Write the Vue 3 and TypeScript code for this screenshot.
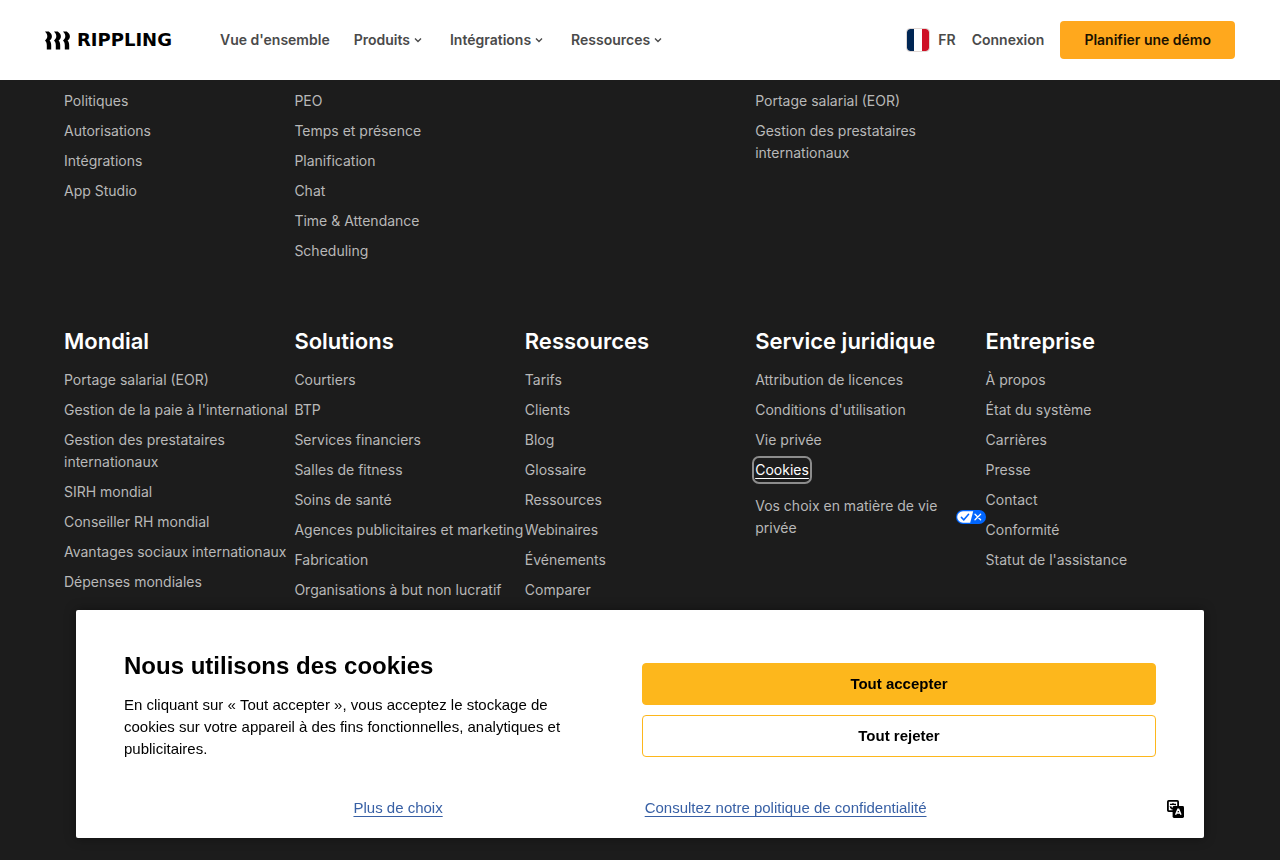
<script setup lang="ts">
interface Menu {
  label: string
  dropdown: boolean
}

interface LinkGroup {
  title: string
  links: string[]
}

const menus: Menu[] = [
  { label: 'Vue d\'ensemble', dropdown: false },
  { label: 'Produits', dropdown: true },
  { label: 'Intégrations', dropdown: true },
  { label: 'Ressources', dropdown: true },
]

const platformColumns: string[][] = [
  ['Politiques', 'Autorisations', 'Intégrations', 'App Studio'],
  ['PEO', 'Temps et présence', 'Planification', 'Chat', 'Time & Attendance', 'Scheduling'],
  [],
  ['Portage salarial (EOR)', 'Gestion des prestataires internationaux'],
  [],
]

const groups: LinkGroup[] = [
  {
    title: 'Mondial',
    links: [
      'Portage salarial (EOR)',
      'Gestion de la paie à l\'international',
      'Gestion des prestataires internationaux',
      'SIRH mondial',
      'Conseiller RH mondial',
      'Avantages sociaux internationaux',
      'Dépenses mondiales',
    ],
  },
  {
    title: 'Solutions',
    links: [
      'Courtiers',
      'BTP',
      'Services financiers',
      'Salles de fitness',
      'Soins de santé',
      'Agences publicitaires et marketing',
      'Fabrication',
      'Organisations à but non lucratif',
    ],
  },
  {
    title: 'Ressources',
    links: ['Tarifs', 'Clients', 'Blog', 'Glossaire', 'Ressources', 'Webinaires', 'Événements', 'Comparer'],
  },
  {
    title: 'Service juridique',
    links: [
      'Attribution de licences',
      'Conditions d\'utilisation',
      'Vie privée',
      'Cookies',
      'Vos choix en matière de vie privée',
    ],
  },
  {
    title: 'Entreprise',
    links: [
      'À propos',
      'État du système',
      'Carrières',
      'Presse',
      'Contact',
      'Conformité',
      'Statut de l\'assistance',
    ],
  },
]
</script>

<template>
  <div class="page">
    <header class="topbar">
      <a class="logo" href="#" aria-label="Rippling">
        <svg class="logo-mark" viewBox="0 0 25 19" aria-hidden="true">
          <g v-for="x in [0, 9, 18]" :key="x" :transform="`translate(${x} 0)`">
            <path d="M0 0.5H3.8C5.8 2 6.9 3.6 6.9 5.4C6.9 7.2 6 8.4 4.6 9.5C5.8 10.8 6.2 12.4 6.2 14.4V18.5H1.8V14.2C1.8 12.2 1.2 10.7 0 9.5C1.5 8.3 2.3 7 2.3 5.2C2.3 3.5 1.5 2 0 0.5Z" />
          </g>
        </svg>
        <span class="logo-word">RIPPLING</span>
      </a>
      <nav class="menu" aria-label="Principal">
        <template v-for="m in menus" :key="m.label">
          <button v-if="m.dropdown" type="button" class="menu-item">
            {{ m.label }}
            <svg viewBox="0 0 12 12" width="12" height="12" aria-hidden="true">
              <path d="M3 4.5L6 7.5L9 4.5" fill="none" stroke="currentColor" stroke-width="1.4" />
            </svg>
          </button>
          <a v-else href="#" class="menu-item">{{ m.label }}</a>
        </template>
      </nav>
      <div class="actions">
        <button type="button" class="locale">
          <svg viewBox="0 0 24 24" width="24" height="24" aria-hidden="true">
            <clipPath id="flag-clip"><rect x="1" y="1" width="22" height="22" rx="3" /></clipPath>
            <g clip-path="url(#flag-clip)">
              <rect width="8" height="24" fill="#002654" />
              <rect x="8" width="8" height="24" fill="#fff" />
              <rect x="16" width="8" height="24" fill="#ce1126" />
            </g>
            <rect x="0.5" y="0.5" width="23" height="23" rx="3.5" fill="none" stroke="#e0d8d5" />
          </svg>
          FR
        </button>
        <a href="#" class="login">Connexion</a>
        <a href="#" class="demo">Planifier une démo</a>
      </div>
    </header>

    <footer class="footer">
      <div class="columns">
        <ul v-for="(col, i) in platformColumns" :key="i" class="links">
          <li v-for="link in col" :key="link"><a href="#">{{ link }}</a></li>
        </ul>
      </div>
      <div class="columns titled">
        <section v-for="g in groups" :key="g.title">
          <h2>{{ g.title }}</h2>
          <ul class="links">
            <li v-for="link in g.links" :key="link">
              <a v-if="link === 'Cookies'" href="#" class="focused">{{ link }}</a>
              <a v-else-if="link.startsWith('Vos choix')" href="#" class="privacy">
                <span>{{ link }}</span>
                <svg viewBox="0 0 30 14" width="30" height="14" aria-hidden="true">
                  <rect width="30" height="14" rx="7" fill="#06f" />
                  <path d="M7 1.2H17.2L14.2 12.8H7A5.8 5.8 0 0 1 7 1.2Z" fill="#fff" />
                  <path d="M5.4 7.4L7.8 9.8L12.6 4.2" fill="none" stroke="#06f" stroke-width="1.5" stroke-linecap="round" />
                  <path d="M19 4.2L24.6 9.8M24.6 4.2L19 9.8" fill="none" stroke="#fff" stroke-width="1.3" stroke-linecap="round" />
                </svg>
              </a>
              <a v-else href="#">{{ link }}</a>
            </li>
          </ul>
        </section>
      </div>
    </footer>

    <div class="banner" role="dialog" aria-labelledby="cookie-title">
      <div class="banner-main">
        <div class="message">
          <h1 id="cookie-title">Nous utilisons des cookies</h1>
          <p>
            En cliquant sur «&nbsp;Tout accepter&nbsp;», vous acceptez le stockage de cookies sur votre
            appareil à des fins fonctionnelles, analytiques et publicitaires.
          </p>
        </div>
        <div class="choices">
          <button type="button" class="choice accept">Tout accepter</button>
          <button type="button" class="choice">Tout rejeter</button>
        </div>
      </div>
      <div class="banner-links">
        <a href="#">Plus de choix</a>
        <a href="#">Consultez notre politique de confidentialité</a>
      </div>
      <button type="button" class="translate" aria-label="Langue">
        <svg viewBox="0 0 18 18" width="18" height="18" aria-hidden="true">
          <rect x="1.9" y="0.9" width="10.2" height="10.2" rx="0.8" fill="#fff" stroke="#000" stroke-width="1.8" />
          <path d="M4 4.4H10M7 3V4.4M4.6 6.2L5.8 8.4H8.4L9.4 5.6" fill="none" stroke="#000" stroke-width="1.1" />
          <rect x="6.6" y="6" width="11.4" height="12" rx="1.4" />
          <path d="M9.6 14.8L11.9 9.2H12.7L15 14.8M10.6 13H14" fill="none" stroke="#fff" stroke-width="1.4" />
          <path d="M4 6.6L5.4 9H7" fill="none" stroke="#000" stroke-width="1" />
        </svg>
      </button>
    </div>
  </div>
</template>

<style>
html,
body {
  background: #1c1c1c;
}
</style>

<style scoped>
.page {
  height: 100vh;
  overflow: hidden;
  background: #1c1c1c;
  font-family: Inter, 'Liberation Sans', sans-serif;
  font-size: 14px;
  line-height: 22px;
}

a {
  color: inherit;
  text-decoration: none;
}

button {
  margin: 0;
  padding: 0;
  border: 0;
  background: none;
  color: inherit;
  font: inherit;
  cursor: pointer;
}

.topbar {
  display: flex;
  align-items: center;
  height: 80px;
  padding: 0 45px;
  box-sizing: border-box;
  background: #fff;
  color: #4a4a4a;
  font-weight: 600;
}

.logo {
  display: flex;
  align-items: center;
  gap: 7px;
  margin-right: 48px;
  color: #000;
}

.logo-mark {
  width: 25px;
  height: 19px;
}

.logo-word {
  font-family: 'DejaVu Sans', sans-serif;
  font-size: 18px;
  font-weight: 700;
}

.menu {
  display: flex;
  gap: 24px;
}

.menu-item {
  display: flex;
  align-items: center;
  gap: 2px;
  white-space: nowrap;
}

.menu-item svg {
  margin-right: 2px;
}

.actions {
  display: flex;
  align-items: center;
  gap: 16px;
  margin-left: auto;
  white-space: nowrap;
}

.locale {
  display: flex;
  align-items: center;
  gap: 8px;
}

.demo {
  padding: 8px 24px;
  border-radius: 4px;
  background: #ffa81d;
  color: #1a1200;
}

.footer {
  padding: 10px 64px 0;
  color: #b8b8b8;
}

.columns {
  display: grid;
  grid-template-columns: repeat(5, minmax(0, 1fr));
}

.titled {
  margin-top: 63px;
}

h2 {
  margin: 0 0 12px;
  color: #fff;
  font-size: 22px;
  font-weight: 600;
  line-height: 32px;
}

.links {
  display: flex;
  flex-direction: column;
  gap: 8px;
  margin: 0;
  padding: 0;
  list-style: none;
}

.focused {
  display: inline-block;
  border-radius: 4px;
  outline: 2px solid #8c8c8c;
  outline-offset: 1px;
  color: #fff;
  text-decoration: underline;
  text-underline-offset: 3px;
}

.privacy {
  display: flex;
  align-items: center;
  justify-content: space-between;
  gap: 16px;
  padding-top: 6px;
}

.privacy svg {
  flex: none;
}

.banner {
  position: fixed;
  right: 76px;
  bottom: 22px;
  left: 76px;
  padding: 40px 48px 19px;
  border-radius: 2px;
  background: #fff;
  box-shadow: 0 0 12px rgba(0, 0, 0, 0.4);
  color: #000;
  font-family: 'Liberation Sans', sans-serif;
  font-size: 15px;
}

.banner-main {
  display: grid;
  grid-template-columns: 1fr 1fr;
  align-items: end;
  gap: 4px;
}

.message {
  padding-right: 48px;
}

h1 {
  margin: 0 0 12px;
  font-size: 24px;
  font-weight: 700;
  line-height: 32px;
}

p {
  margin: 0;
}

.choices {
  display: flex;
  flex-direction: column;
  gap: 10px;
  padding-bottom: 3px;
}

.choice {
  height: 42px;
  border: 1px solid #fdb71c;
  border-radius: 4px;
  font-weight: 700;
}

.accept {
  background: #fdb71c;
}

.banner-links {
  display: flex;
  justify-content: center;
  gap: 202px;
  margin-top: 37px;
  color: #3860a5;
}

.banner-links a {
  text-decoration: underline;
  text-underline-offset: 3px;
}

.translate {
  position: absolute;
  right: 20px;
  bottom: 20px;
  display: flex;
}
</style>
